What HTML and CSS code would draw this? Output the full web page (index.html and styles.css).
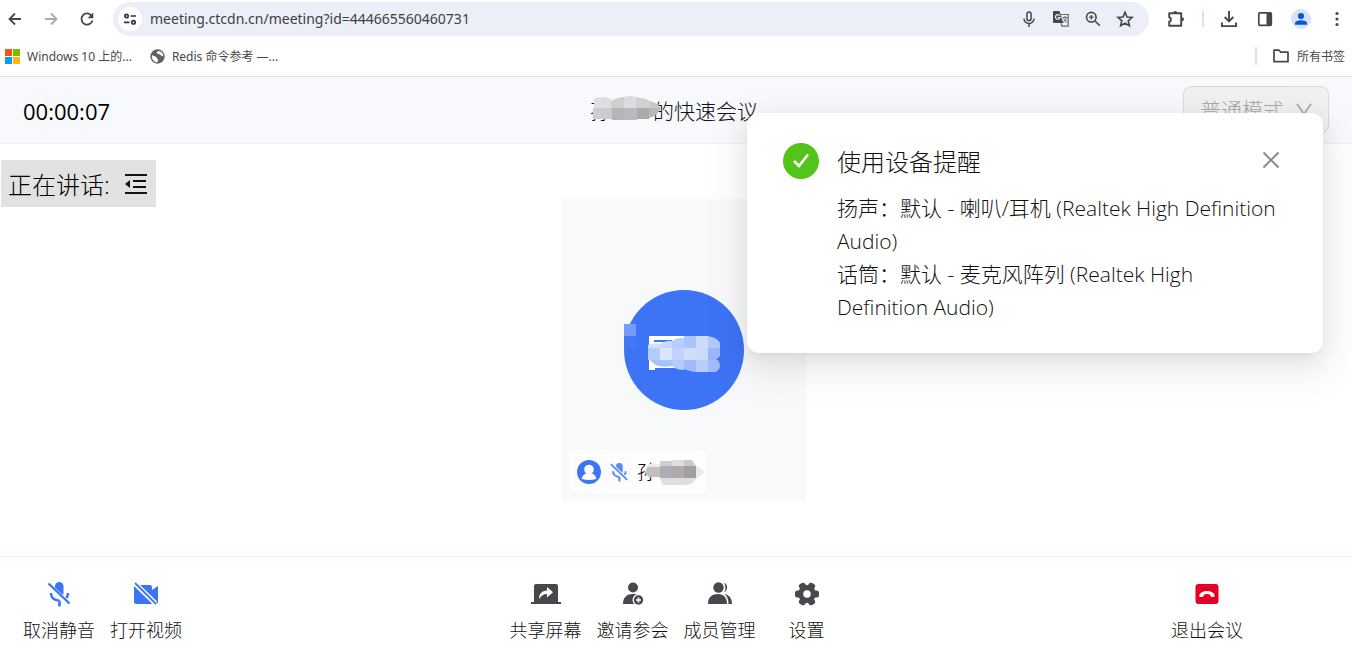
FILE: index.html
```html
<!DOCTYPE html>
<html lang="zh-CN">
<head>
<meta charset="utf-8">
<title>快速会议</title>
<link rel="stylesheet" href="styles.css">
</head>
<body>
<div class="toolbar">
  <button class="tool" aria-label="后退"><svg width="16" height="16" viewBox="0 0 16 16" fill="none" stroke="#474747" stroke-width="1.8"><path d="M14 8H3M8 2.5 2.5 8 8 13.500"/></svg></button>
  <button class="tool" aria-label="前进"><svg width="16" height="16" viewBox="0 0 16 16" fill="none" stroke="#ababab" stroke-width="1.8"><path d="M2 8h11M8 2.500 13.500 8 8 13.500"/></svg></button>
  <button class="tool" aria-label="刷新"><svg width="16" height="16" viewBox="0 0 16 16"><path d="M12.800 5A5.600 5.600 0 1 0 13.500 9.500" fill="none" stroke="#474747" stroke-width="1.800"/><path d="M14.300 1.500v5.700H8.600z" fill="#474747"/></svg></button>
  <div class="omnibox">
    <button class="site" aria-label="网站信息"><svg width="16" height="16" viewBox="0 0 16 16" fill="none" stroke="#333" stroke-width="1.700"><circle cx="4.500" cy="5" r="1.700"/><path d="M8.500 5H14M2 11.300h5.500"/><circle cx="11.500" cy="11.300" r="1.700"/></svg></button>
    <input class="url" aria-label="地址" value="meeting.ctcdn.cn/meeting?id=444665560460731">
    <div class="omni-icons">
      <button aria-label="麦克风"><svg width="18" height="18" viewBox="0 0 18 18" fill="none" stroke="#474747" stroke-width="1.500"><rect x="6.900" y="2" width="4.200" height="8.600" rx="2.100"/><path d="M4 8.500a5 5 0 0 0 10 0M9 13.500V17"/></svg></button>
      <button aria-label="翻译"><svg width="18" height="18" viewBox="0 0 18 18"><path d="M2 1h5.500l3.600 12H2a1 1 0 0 1-1-1V2a1 1 0 0 1 1-1z" fill="#474747"/><path d="M8.500 4.500h7.700v11.700H10l-1-3" fill="none" stroke="#666" stroke-width="1.200"/><path d="M7.600 5.600A2.300 2.300 0 1 0 8 7.500H5.800" fill="none" stroke="#eceff8" stroke-width="1.200"/><path d="M10.500 7.500h5M13 6v1.500M14.500 7.500c-.5 2-2 4-3.500 5M11.500 8.500c.8 1.700 2 3 3.500 4" fill="none" stroke="#666"/></svg></button>
      <button aria-label="缩放"><svg width="18" height="18" viewBox="0 0 18 18" fill="none" stroke="#474747" stroke-width="1.600"><circle cx="7.300" cy="7.200" r="4.800"/><path d="m10.800 10.700 5 5"/><path d="M7.300 5v4.400M5.100 7.200h4.400" stroke-width="1.300"/></svg></button>
      <button aria-label="收藏"><svg width="18" height="18" viewBox="0 0 18 18" fill="none" stroke="#474747" stroke-width="1.600"><path d="m9 2.300 2 4.700 5.100.4-3.900 3.400 1.200 5L9 13.100l-4.400 2.700 1.200-5-3.900-3.400L7 7z"/></svg></button>
    </div>
  </div>
  <div class="browser-icons">
    <button class="tool" aria-label="扩展程序"><svg width="20" height="20" viewBox="0 0 20 20"><path d="M3.200 4.200h12v12.600h-12v-4.200a2.200 2.200 0 0 0 0-4.300z" fill="none" stroke="#474747" stroke-width="1.900" stroke-linejoin="round"/><path d="M7.200 4a2 2 0 0 1 4 0zM16 8.300a2 2 0 0 1 0 4z" fill="#474747"/></svg></button>
    <span class="divider"></span>
    <button class="tool" aria-label="下载"><svg width="20" height="20" viewBox="0 0 20 20" fill="none" stroke="#474747" stroke-width="1.900"><path d="M10 2v10M5.700 8 10 12.300 14.300 8M2.900 13.500v3.600h14.200v-3.600"/></svg></button>
    <button class="tool" aria-label="侧边栏"><svg width="20" height="20" viewBox="0 0 20 20"><rect x="3.800" y="3.800" width="12.500" height="12.500" rx="1" fill="none" stroke="#474747" stroke-width="1.700"/><path d="M11.500 4h5v12h-5z" fill="#474747"/></svg></button>
    <button class="tool profile" aria-label="个人资料"><svg width="20" height="20" viewBox="0 0 20 20"><circle cx="10" cy="10" r="10" fill="#d3e3fd"/><circle cx="10" cy="7" r="3.100" fill="#0b57d0"/><path d="M4 15.800v-1.500c0-4 12-4 12 0v1.500z" fill="#0b57d0"/></svg></button>
    <button class="tool" aria-label="菜单"><svg width="20" height="20" viewBox="0 0 20 20" fill="#474747"><circle cx="10" cy="4.500" r="1.600"/><circle cx="10" cy="10" r="1.600"/><circle cx="10" cy="15.500" r="1.600"/></svg></button>
  </div>
</div>
<nav class="bookmarks">
  <a href="#"><svg width="15" height="15" viewBox="0 0 15 15"><path fill="#f65314" d="M0 0h7v7H0z"/><path fill="#7cbb00" d="M8 0h7v7H8z"/><path fill="#00a1f1" d="M0 8h7v7H0z"/><path fill="#ffbb00" d="M8 8h7v7H8z"/></svg>Windows 10 上的...</a>
  <a href="#"><svg width="15" height="15" viewBox="0 0 15 15"><circle cx="7.500" cy="7.500" r="7.200" fill="#5f6368"/><path d="M2 6c1.500 1.500 4 .8 4.500 2.500S9 10 8 12c-.5 1.500-1.500 1.600-2.500 1C2.500 11.500 1.300 9 2 6zM8 2.200c-2 .8-1.500 2.300.5 2.800s2.500 2 4.700 2.300C13.500 4 11 1.800 8 2.200z" fill="#fff"/></svg>Redis 命令参考 —...</a>
  <a href="#" class="all"><svg width="18" height="16" viewBox="0 0 18 16"><path d="M2 2.200h5l1.800 2H16v9.500H2z" fill="none" stroke="#474747" stroke-width="1.700" stroke-linejoin="round"/></svg>所有书签</a>
</nav>

<div class="meeting">
  <header class="head">
    <time class="timer">00:00:07</time>
    <h1 class="title"><span class="masked">孙<svg class="title-mask" width="72" height="26" viewBox="0 0 72 26"><path d="M3 3q7-4 17 0v9H3z" fill="#dcdfe1"/><path d="M20 5Q28 1 33 1v11H20z" fill="#cfd0d2"/><path d="M33 1q7-2 12 0v11H33z" fill="#dbdcdf"/><path d="M45 1q9 1 14 4v7H45z" fill="#d0d1d2"/><path d="M59 5q9 3 11 7H59z" fill="#c5c6c8"/><path d="M2 12h8v11H2z" fill="#d1cccf"/><path d="M10 12h11v11H10z" fill="#c6cccf"/><path d="M21 12h12v12H21z" fill="#b4b5b7"/><path d="M33 12h13v12H33z" fill="#b9babc"/><path d="M46 12h12v11H46z" fill="#a9aaac"/><path d="M58 12h12q-4 8-12 10z" fill="#b6b7b9"/></svg></span>的快速会议</h1>
    <div class="mode">
      <select aria-label="会议模式" disabled><option>普通模式</option></select>
      <svg width="16" height="14" viewBox="0 0 16 14" fill="none" stroke="#aaaaac" stroke-width="1.800"><path d="m1 1 7 10 7-10"/></svg>
    </div>
  </header>

  <main class="stage">
    <div class="speaking">正在讲话:<button aria-label="收起"><svg width="24" height="22" viewBox="0 0 24 22"><path d="M1 2h22M9 8h13M9 14h13M1 20h22" stroke="#111" stroke-width="2"/><path d="M6 7v8l-5-4z" fill="#111"/></svg></button></div>
    <section class="tile">
      <div class="avatar"><svg width="120" height="120" viewBox="0 0 120 120"><circle cx="60" cy="60" r="60" fill="#3d74f6"/><path d="M0 34h12v12H0z" fill="#779cf7"/><path d="M0 46h12v15q-5-5-12-5z" fill="#4477f5"/><path d="M25 46h35v34H25z" fill="#fff"/><path d="M30 51h18M31 79h29" stroke="#3d74f6" stroke-width="2"/><path d="M24 55q7-3 12-1v4H24z" fill="#d2e0fc"/><path d="M36 54q7-4 12-3v7H36z" fill="#c9d9fd"/><path d="M48 51q6-4 12-3v10H48z" fill="#b8cdfc"/><path d="M60 46h12v12H60z" fill="#abc4fa"/><path d="M72 46h12v12H72z" fill="#ccdcfd"/><path d="M84 46q10 2 12 7v5H84z" fill="#b4c9fa"/><path d="M24 58h12v12H24z" fill="#b3ccfc"/><path d="M36 58h12v12H36z" fill="#dae6ff"/><path d="M48 58h12v12H48z" fill="#c1d2fc"/><path d="M60 58h12v12H60z" fill="#d0defc"/><path d="M72 58h12v12H72z" fill="#cbdafb"/><path d="M84 58h12v8l-4 4h-8z" fill="#9cb6f8"/><path d="M26 70h22v6q-12 2-18-2z" fill="#a8c3f9"/><path d="M48 70h12v10q-8 0-12-4z" fill="#b6cbfb"/><path d="M60 70h12v12q-8-1-12-3z" fill="#9fbcf9"/><path d="M72 70h12v12H72z" fill="#bacdfb"/><path d="M84 70h10q5 7-2 12h-8z" fill="#a3bbf8"/></svg></div>
      <div class="nametag">
        <svg width="24" height="24" viewBox="0 0 24 24"><circle cx="12" cy="12" r="12" fill="#3d74f6"/><circle cx="12" cy="9.500" r="4.800" fill="#fff"/><path d="M9 13.500h6c3 1 4 3 4.300 5.500a30 30 0 0 1-14.600 0c.3-2.500 1.300-4.500 4.300-5.500z" fill="#fff"/></svg>
        <svg class="mic-small" width="18" height="20" viewBox="0 0 24 26"><g fill="none" stroke="#5d8af5"><rect x="8" y="1" width="9" height="15" rx="4.500" fill="#5d8af5" stroke="none"/><path d="M4 12c0 4.500 3.500 7.500 8.500 7.500S21 16.500 21 12M12.500 19v6.500" stroke-width="2.800"/><path d="m.5 3 22 21" stroke="#fdfdfe" stroke-width="6"/><path d="m1 2.500 22 21" stroke-width="2.500"/></g></svg>
        <span class="masked">孙<svg class="name-mask" width="62" height="26" viewBox="0 0 62 26"><path d="M4 6h12v11H5l-4-4z" fill="#c4bfbd"/><path d="M5 4h11v3H4z" fill="#ececee"/><path d="M16 1h12v6H16z" fill="#cfcfd1"/><path d="M28 0h12v6H28z" fill="#dedee0"/><path d="M40 0h8l4 6H40z" fill="#c9cacc"/><path d="M16 6h12v12H16z" fill="#abaeb9"/><path d="M28 6h12v12H28z" fill="#b2abab"/><path d="M40 6h12v12H40z" fill="#9fa0a4"/><path d="m52 6 9 6-9 7z" fill="#e7e9ec"/><path d="M16 18h36q-2 7-12 7H19z" fill="#dedee1"/></svg></span>
      </div>
    </section>
  </main>

  <footer class="controls">
    <div class="group">
      <button class="ctl"><svg width="24" height="28" viewBox="0 0 24 28"><g fill="none" stroke="#3d74f6"><rect x="8" y="2" width="8.500" height="15" rx="4.200" fill="#3d74f6" stroke="none"/><path d="M4 13c0 4.500 3.500 7.500 8.500 7.500S21 17.500 21 13M12.500 20v6.500" stroke-width="2.600"/><path d="m.5 5 22 20" stroke="#fff" stroke-width="6"/><path d="m1.500 3.500 21 20" stroke-width="2.400"/></g></svg>取消静音</button>
      <button class="ctl"><svg width="26" height="28" viewBox="0 0 26 28"><path d="M3 5h14q2 0 2 2v3l6-4v17h-6q0 1-1 1H3q-2 0-2-2V7q0-2 2-2z" fill="#3d74f6"/><path d="m1.500 3 21 20.500" stroke="#fff" stroke-width="5"/><path d="m2 3 21 21" stroke="#3d74f6" stroke-width="1.800"/></svg>打开视频</button>
    </div>
    <div class="group">
      <button class="ctl"><svg width="30" height="28" viewBox="0 0 30 28"><path d="M5 4h20q2 0 2 2v16h3v2H0v-2h3V6q0-2 2-2z" fill="#45494e"/><path d="M8 19c0-5 3-8.500 8-8.500V7l6 5.300-6 5.200V14c-4 0-6 2-8 5z" fill="#fff"/></svg>共享屏幕</button>
      <button class="ctl"><svg width="22" height="28" viewBox="0 0 22 28"><circle cx="11" cy="7.500" r="5" fill="#45494e"/><path d="M1 24c0-7 4-10 10-10 5 0 8 2 9 7v3z" fill="#45494e"/><circle cx="16.500" cy="20" r="6" fill="#fff"/><circle cx="16.500" cy="20" r="4.700" fill="#45494e"/><path d="M16.500 17.500v5M14 20h5" stroke="#fff" stroke-width="1.600"/></svg>邀请参会</button>
      <button class="ctl"><svg width="24" height="28" viewBox="0 0 24 28" fill="#45494e"><circle cx="10.500" cy="7.500" r="5.200"/><path d="M0 24c0-7 4-10 10-10s9 4 9 10zM16 3c4 1 4.500 7 0 9.500 2-3 2-6.500 0-9.500zM16.500 14c5 1 7.500 4.500 7.500 10h-3.500c0-4-1-7.500-4-10z"/></svg>成员管理</button>
      <button class="ctl"><svg width="24" height="28" viewBox="0 0 24 28"><g fill="#45494e"><circle cx="12" cy="14" r="9"/><rect x="0" y="10.500" width="24" height="7" rx="2.500"/><rect x="0" y="10.500" width="24" height="7" rx="2.500" transform="rotate(60 12 14)"/><rect x="0" y="10.500" width="24" height="7" rx="2.500" transform="rotate(120 12 14)"/></g><circle cx="12" cy="14" r="3.800" fill="#fff"/></svg>设置</button>
    </div>
    <div class="group end">
      <button class="ctl"><svg width="24" height="28" viewBox="0 0 24 28"><rect x=".5" y="4" width="23" height="20" rx="3" fill="#e60028"/><path d="M4.500 16.500c-1-3 3-5.500 7.500-5.500s8.500 2.500 7.500 5.500c-.5 1-3.500.5-4-.3l-.5-1.700q-3-.8-6 0l-.5 1.700c-.5.800-3.500 1.300-4 .3z" fill="#fff"/></svg>退出会议</button>
    </div>
  </footer>

  <aside class="notice" role="alert">
    <svg class="ok" width="36" height="36" viewBox="0 0 36 36"><circle cx="18" cy="18" r="18" fill="#52c41a"/><path d="m11 18 5 5 9-11.500" fill="none" stroke="#fff" stroke-width="2.500"/></svg>
    <div class="notice-body">
      <h2>使用设备提醒</h2>
      <p>扬声：默认 - 喇叭/耳机 (Realtek High Definition Audio)</p>
      <p>话筒：默认 - 麦克风阵列 (Realtek High Definition Audio)</p>
    </div>
    <button class="close" aria-label="关闭"><svg width="18" height="18" viewBox="0 0 18 18" stroke="#858585" stroke-width="1.800"><path d="m1.500 1.500 15 15M16.500 1.500l-15 15"/></svg></button>
  </aside>
</div>
</body>
</html>
```
FILE: styles.css
```css
* { box-sizing: border-box; }
body {
  margin: 0;
  min-height: 100vh;
  display: flex;
  flex-direction: column;
  background: #fff;
  color: #111;
  font-family: "Open Sans", "Noto Sans CJK SC", sans-serif;
}
button {
  border: 0;
  padding: 0;
  background: none;
  color: inherit;
  font: inherit;
  display: flex;
  align-items: center;
  justify-content: center;
}
svg { display: block; flex: none; }
a { color: inherit; text-decoration: none; }
h1, h2, p { margin: 0; font-weight: 300; }

.toolbar {
  height: 38px;
  display: flex;
  align-items: center;
  gap: 20px;
  padding: 0 5px 0 7px;
}
.omnibox {
  flex: 1;
  height: 34px;
  display: flex;
  align-items: center;
  gap: 8px;
  margin-left: -2px;
  padding: 0 15px 0 5px;
  border-radius: 17px;
  background: #eceff8;
}
.site { width: 24px; height: 24px; border-radius: 50%; background: #fff; }
.url {
  flex: 1;
  min-width: 0;
  padding: 0 0 2px;
  border: 0;
  background: none;
  color: #3c4043;
  font: 14px "Noto Sans", sans-serif;
}
.omni-icons { display: flex; gap: 14px; }
.browser-icons { display: flex; align-items: center; gap: 16px; margin-left: -3px; }
.divider { width: 2px; height: 16px; background: #d3e3fd; margin-right: -1px; }

.bookmarks {
  height: 38px;
  display: flex;
  align-items: center;
  gap: 18px;
  padding: 0 7px 2px 5px;
  color: #474747;
  font-family: "Noto Sans", "Noto Sans CJK SC", sans-serif;
  font-size: 12px;
}
.bookmarks a { display: flex; align-items: center; gap: 7px; }
.bookmarks .all {
  margin-left: auto;
  padding-left: 15px;
  border-left: 2px solid #d3e3fd;
}

.meeting {
  position: relative;
  flex: 1;
  display: flex;
  flex-direction: column;
  font-weight: 300;
}
.head {
  height: 68px;
  display: grid;
  grid-template-columns: 1fr auto 1fr;
  align-items: center;
  padding: 0 23px;
  border-top: 1px solid #dfe1dc;
  border-bottom: 1px solid #f3efee;
  background: #f8f9fc;
}
.timer { font-size: 22px; font-weight: 400; color: #000; padding-top: 2px; }
.title { display: flex; font-size: 21px; color: #111; margin-right: 4px; }
.masked { position: relative; width: 63px; }
.title-mask { position: absolute; left: 1px; top: 1px; }
.mode {
  justify-self: end;
  width: 146px;
  height: 48px;
  display: flex;
  align-items: center;
  padding: 0 16px;
  border: 1px solid #d9d9d9;
  border-radius: 9px;
  background: #f0f1f3;
}
.mode select {
  flex: 1;
  min-width: 0;
  appearance: none;
  border: 0;
  padding: 0;
  background: none;
  color: #a8a8aa;
  opacity: 1;
  font: inherit;
  font-size: 21px;
}

.stage {
  position: relative;
  flex: 1;
  display: flex;
  align-items: center;
  justify-content: center;
  padding-left: 15px;
}
.speaking {
  position: absolute;
  left: 1px;
  top: 16px;
  height: 47px;
  display: flex;
  align-items: center;
  gap: 14px;
  padding: 0 8px 0 7px;
  background: #e2e2e2;
  color: #000;
  font-size: 24px;
}
.tile {
  width: 245px;
  height: 302px;
  display: flex;
  flex-direction: column;
  justify-content: space-between;
  padding: 91px 8px 8px;
  background: #f8f9fb;
}
.avatar { align-self: center; }
.nametag {
  align-self: flex-start;
  height: 43px;
  display: flex;
  align-items: center;
  gap: 9px;
  padding: 0 7px 0 8px;
  border-radius: 6px;
  background: #fdfdfe;
  color: #000;
  font-size: 20px;
}
.name-mask { position: absolute; left: 7px; top: 3px; }

.controls {
  display: grid;
  grid-template-columns: 1fr auto 1fr;
  height: 115px;
  padding: 23px 23px 0;
  border-top: 1px solid #ffeeee;
}
.group { display: flex; align-items: flex-start; gap: 15px; }
.group.end { justify-content: flex-end; padding-right: 86px; }
.ctl {
  width: 72px;
  flex-direction: column;
  gap: 9px;
  font-size: 18px;
  line-height: 27px;
  color: #111;
}

.notice {
  position: absolute;
  top: 37px;
  right: 29px;
  width: 576px;
  display: flex;
  gap: 18px;
  padding: 30px 36px 29px;
  border-radius: 12px;
  background: #fff;
  box-shadow: 0 9px 24px rgba(0, 0, 0, .08), 0 4px 9px -6px rgba(0, 0, 0, .12), 0 14px 42px 12px rgba(0, 0, 0, .05);
  color: #111;
}
.notice-body { flex: 1; }
.notice h2 { font-size: 24px; line-height: 37px; padding-bottom: 12px; }
.notice p { font-size: 21px; line-height: 33px; }
.close { position: absolute; top: 38px; right: 43px; }
```
